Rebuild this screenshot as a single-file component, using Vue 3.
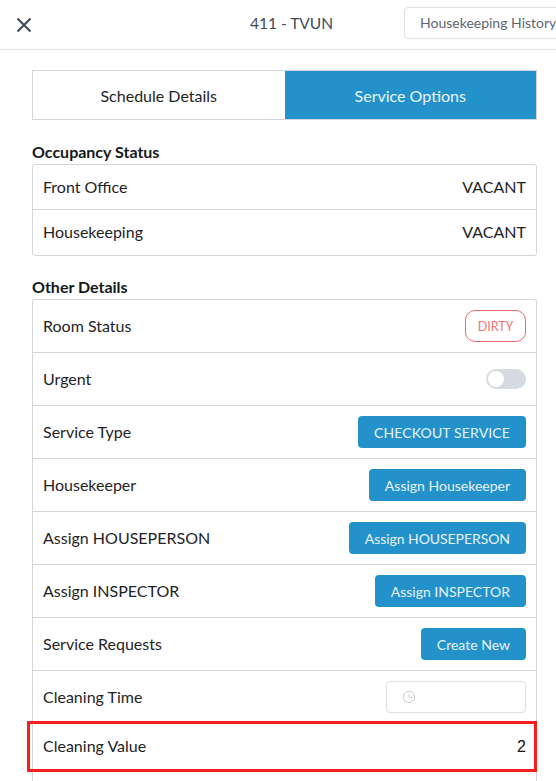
<script setup>
const actions = [
  { label: 'Service Type', text: 'CHECKOUT SERVICE', wide: true },
  { label: 'Housekeeper', text: 'Assign Housekeeper' },
  { label: 'Assign HOUSEPERSON', text: 'Assign HOUSEPERSON', tight: true },
  { label: 'Assign INSPECTOR', text: 'Assign INSPECTOR' },
  { label: 'Service Requests', text: 'Create New' },
]
</script>

<template>
  <div class="page">
    <header class="top">
      <svg class="close" width="16" height="16" viewBox="0 0 16 16" aria-hidden="true">
        <path d="M1.5 1.5 14.5 14.5M14.5 1.5 1.5 14.5" fill="none" stroke="#3d4a5a" stroke-width="2" />
      </svg>
      <div class="title">411 - TVUN</div>
      <button class="history">Housekeeping History</button>
    </header>

    <main class="content">
      <div class="tabs">
        <div class="tab">Schedule Details</div>
        <div class="tab active">Service Options</div>
      </div>

      <h2 class="heading first">Occupancy Status</h2>
      <section class="card">
        <div class="row short"><span class="lbl">Front Office</span><span class="lbl">VACANT</span></div>
        <div class="row short"><span class="lbl">Housekeeping</span><span class="lbl">VACANT</span></div>
      </section>

      <h2 class="heading second">Other Details</h2>
      <section class="card open">
        <div class="row"><span class="lbl">Room Status</span><span class="dirty">DIRTY</span></div>
        <div class="row">
          <span class="lbl">Urgent</span>
          <span class="toggle"><span class="knob"></span></span>
        </div>
        <div v-for="a in actions" :key="a.label" class="row">
          <span class="lbl">{{ a.label }}</span>
          <button class="action" :class="{ wide: a.wide, tight: a.tight }">{{ a.text }}</button>
        </div>
        <div class="row time-row">
          <span class="lbl">Cleaning Time</span>
          <div class="time">
            <svg width="14" height="14" viewBox="0 0 14 14" aria-hidden="true">
              <circle cx="7" cy="7" r="5.6" fill="none" stroke="#c9ced6" />
              <path d="M7 3.8V7.4H10" fill="none" stroke="#c9ced6" />
            </svg>
          </div>
        </div>
        <div class="row value-row">
          <span class="lbl">Cleaning Value</span><span class="value">2</span>
          <div class="highlight"></div>
        </div>
        <div class="row"></div>
      </section>
    </main>
  </div>
</template>

<style>
html, body { margin: 0; background: #fff; overflow: hidden; }
</style>

<style scoped>
.page {
  width: 556px;
  height: 781px;
  overflow: hidden;
  background: #fff;
  font-family: Lato, "Liberation Sans", sans-serif;
  font-size: 16px;
  color: #1f2326;
}
.top {
  height: 49px;
  border-bottom: 1px solid #dfe1e4;
  display: flex;
  align-items: center;
  position: relative;
  padding-left: 16px;
}
.title {
  position: absolute;
  left: 0;
  top: 12px;
  width: 583px;
  text-align: center;
  font-size: 15.5px;
  line-height: 22px;
  color: #3d4a5a;
}
.close { flex: none; }
.history {
  position: absolute;
  left: 404px;
  top: 7px;
  width: 170px;
  height: 32px;
  padding: 0 0 2px 15px;
  text-align: left;
  white-space: nowrap;
  border: 1px solid #dcdfe4;
  border-radius: 4px;
  background: #fff;
  color: #5d6672;
  font: 14px Lato, sans-serif;
}
.content { padding: 20px 19px 0 32px; }
.tabs {
  display: flex;
  height: 50px;
  box-sizing: border-box;
  border: 1px solid #d3d5d8;
}
.tab {
  flex: 1;
  display: flex;
  align-items: center;
  justify-content: center;
}
.tab.active { background: #2492ca; color: #eaf5fb; }
.heading {
  margin: 0;
  font-size: 16px;
  line-height: 20px;
  font-weight: 700;
  color: #15181a;
}
.heading.first { margin-top: 22px; margin-bottom: 2px; }
.heading.second { margin-top: 21px; margin-bottom: 2px; }
.card {
  border: 1px solid #d3d5d8;
  border-radius: 3px;
}
.card.open { border-bottom: 0; border-radius: 3px 3px 0 0; }
.row {
  height: 53px;
  box-sizing: border-box;
  display: flex;
  align-items: center;
  justify-content: space-between;
  padding: 0 10px;
  border-bottom: 1px solid #d3d5d8;
  position: relative;
}
.row.short { height: 45px; }
.row.short:last-child { border-bottom: 0; }
.lbl { padding-bottom: 2px; }
.dirty {
  width: 61px;
  height: 32px;
  box-sizing: border-box;
  border: 1px solid #ef6a6f;
  border-radius: 10px;
  display: flex;
  align-items: center;
  justify-content: center;
  color: #ef7378;
  font-size: 12.5px;
}
.toggle {
  width: 40px;
  height: 20px;
  border-radius: 10px;
  background: #d6dae1;
  position: relative;
}
.knob {
  position: absolute;
  left: 2px;
  top: 2px;
  width: 16px;
  height: 16px;
  border-radius: 50%;
  background: #fff;
}
.action {
  height: 32px;
  padding: 0 16px;
  border: 0;
  border-radius: 4px;
  background: #2492ca;
  color: #e6f3fa;
  font: 14px Lato, sans-serif;
  white-space: nowrap;
}
.action.wide { letter-spacing: 0.13px; }
.action.tight { letter-spacing: -0.06px; }
.time {
  width: 140px;
  height: 32px;
  box-sizing: border-box;
  border: 1px solid #dcdfe4;
  border-radius: 4px;
  display: flex;
  align-items: center;
  padding-left: 15px;
}
.time-row { height: 52px; border-bottom: 0; }
.value-row { height: 49px; padding-bottom: 3px; border-bottom: 0; }
.value { color: #111; font-family: "Liberation Sans", sans-serif; padding-top: 2px; }
.highlight {
  position: absolute;
  left: -6px;
  right: -1px;
  top: -2px;
  height: 51px;
  box-sizing: border-box;
  border: 3px solid #f5201b;
  pointer-events: none;
}
</style>
